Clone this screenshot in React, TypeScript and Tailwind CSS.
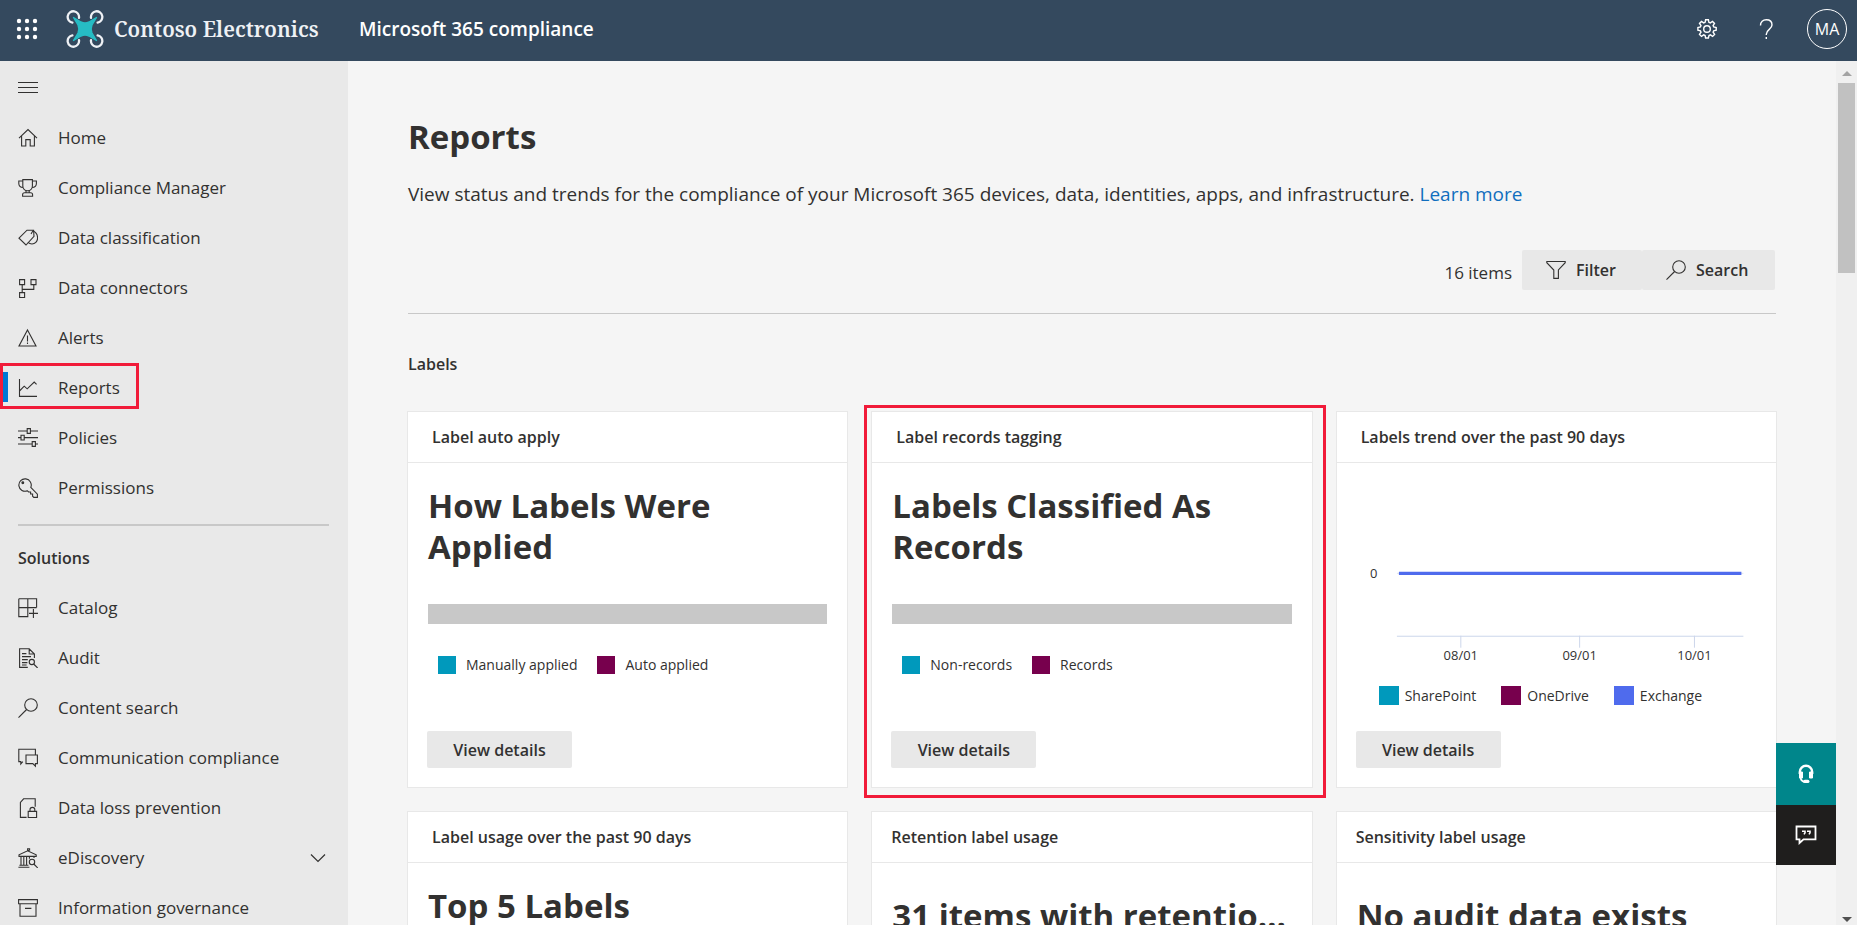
import type { ReactNode } from "react";

function Icon({ children }: { children: ReactNode }) {
  return (
    <svg viewBox="0 0 20 20" className="h-5 w-5 shrink-0" fill="none" stroke="currentColor" strokeWidth="1.1" aria-hidden="true">
      {children}
    </svg>
  );
}

const icons: Record<string, ReactNode> = {
  home: <path d="M1 10.2 10 1.6l9 8.6M3.6 8.2v9.8h4.2v-6.4h4.4V18h4.2V8.2" />,
  trophy: (
    <path d="M4.8 1.6h9.6v6.2c0 3-2 5-4.8 5s-4.8-2-4.8-5zM4.8 3H.8v2.4c0 2.2 1.6 3.8 4.4 4M14.4 3h4v2.4c0 2.2-1.6 3.8-4.4 4M8 12.6v2.2h3.2v-2.2M4.6 18.2v-1.4c0-1.2.8-2 2-2h6c1.2 0 2 .8 2 2v1.4z" />
  ),
  tags: (
    <>
      <path d="M1 10.2 9 2.2h6.6l.4 6.2-8 8.6z" />
      <path d="m13 6 2-3.2c2 1 4.6 3.6 4.6 7.2 0 3.8-2.8 6-5.6 6-1.6 0-3-.6-4-1.6" />
    </>
  ),
  connectors: <path d="M1.6 1.6h5v5h-5zM13 1.6h5v5h-5zM1.6 14.6h5v5h-5zM4.2 6.6v8M15.8 6.6v4.8H4.2" />,
  alert: <path d="M9.5 2 18 18H1zM9.5 7.4v6M9.5 14.6v1.4" />,
  chart: <path d="M1.5 1v17.4H19M1.5 13l4.7-4.8 3 2.6 7-6.8 2.4 2.4" />,
  sliders: (
    <path d="M0 3h9.2M12.4 3H20M0 9.6h3M6.2 9.6H20M0 16h14.2M17.4 16H20M9.2.6h3.2v4.8H9.2zM3 7.2h3.2V12H3zM14.2 13.6h3.2v4.8h-3.2z" />
  ),
  key: (
    <>
      <path d="M12.8 9.4a6.2 6.2 0 1 0-3.4 3.4l1.2 1.2h2v2h2v2.2l1.2 1.2h3.6v-3.2z" />
      <circle cx="4.8" cy="4.8" r=".9" fill="currentColor" />
    </>
  ),
  catalog: <path d="M.8.8h17.8v8.8M.8.8v17.8h9V.8M.8 9.6h17.8M15.4 11v9M11 15.4h9" />,
  audit: (
    <>
      <path d="M9.8 19.4H1.6V.8h9.6l5.2 5.2v4M11.2.8V6h5.2M4 5.6h4.4M4 8.6h9M4 11.6h5.8M4 14.6h5.4M4 17h4.6" />
      <circle cx="13.8" cy="14" r="2.6" />
      <path d="m15.6 16 4 4" />
    </>
  ),
  search: (
    <>
      <circle cx="13" cy="7" r="6.3" />
      <path d="M8.6 11.5.5 19.6" />
    </>
  ),
  chat: <path d="M4.8 13.6 2.8 16v-2.4H.8V1.2h16.6v5.4M8 7h11.4v8.6h-2v2.6l-2.6-2.6H8z" />,
  dlp: (
    <>
      <path d="M8.6 19.4H2.4V4.4L5.6.8h11.6v8" />
      <path d="M10.2 13.4h8.4v6.2h-8.4zM12 13.4v-1.8c0-1.4 1-2.2 2.4-2.2s2.4.8 2.4 2.2v1.8" />
    </>
  ),
  bank: (
    <>
      <path d="M1 8.4V6.8l8.6-4 8.6 4v1.6zM9.6 3V.8h2v1.4h-2M3 8.4v8.8M5.8 8.4v8.8M8.6 8.4v8.8M11.4 8.4v2.4M16 8.4V10M.4 19.2h11M1.4 17.2h9" />
      <circle cx="14" cy="14" r="2.7" />
      <path d="m15.8 16 4 4" />
    </>
  ),
  archive: <path d="M.6 1.6h18.8v4.2H.6zM2 5.8v12.4h16V5.8M7 10.4h6.4" />,
};

type Item = { label: string; icon: string; active?: boolean; expandable?: boolean };

const mainItems: Item[] = [
  { label: "Home", icon: "home" },
  { label: "Compliance Manager", icon: "trophy" },
  { label: "Data classification", icon: "tags" },
  { label: "Data connectors", icon: "connectors" },
  { label: "Alerts", icon: "alert" },
  { label: "Reports", icon: "chart", active: true },
  { label: "Policies", icon: "sliders" },
  { label: "Permissions", icon: "key" },
];

const solutionItems: Item[] = [
  { label: "Catalog", icon: "catalog" },
  { label: "Audit", icon: "audit" },
  { label: "Content search", icon: "search" },
  { label: "Communication compliance", icon: "chat" },
  { label: "Data loss prevention", icon: "dlp" },
  { label: "eDiscovery", icon: "bank", expandable: true },
  { label: "Information governance", icon: "archive" },
];

function NavList({ items }: { items: Item[] }) {
  return (
    <ul>
      {items.map((item) => (
        <li key={item.label} className="relative">
          <a href="#" aria-current={item.active ? "page" : undefined} className="flex h-[50px] items-center gap-5 pl-[18px] pr-[22px]">
            <Icon>{icons[item.icon]}</Icon>
            <span className="grow">{item.label}</span>
            {item.expandable && (
              <svg viewBox="0 0 16 16" className="h-4 w-4" fill="none" stroke="currentColor" strokeWidth="1.2" aria-hidden="true">
                <path d="m1 4.5 7 7 7-7" />
              </svg>
            )}
          </a>
          {item.active && (
            <>
              <span className="absolute left-[3px] top-[9px] h-[30px] w-[5px] bg-[#0078d4]" />
              <span className="pointer-events-none absolute left-0 top-0 h-[46px] w-[139px] border-[3px] border-[#f11b39]" />
            </>
          )}
        </li>
      ))}
    </ul>
  );
}

function Logo() {
  const rotor = "M6.4 12.6A5.7 5.7 0 1 1 13 7.8";
  return (
    <svg viewBox="0 0 38 38" className="h-[38px] w-[38px]" fill="none" aria-hidden="true">
      <g stroke="#eef1f5" strokeWidth="2.3" strokeLinecap="round">
        <path d={rotor} />
        <path d={rotor} transform="matrix(-1 0 0 1 38 0)" />
        <path d={rotor} transform="matrix(1 0 0 -1 0 38)" />
        <path d={rotor} transform="matrix(-1 0 0 -1 38 38)" />
      </g>
      <path
        d="M7.5 7.5 15 12q4 1.8 8 0l7.500-4.500L26 15q-1.800 4 0 8l4.500 7.500L23 26q-4-1.800-8 0l-7.500 4.500L12 23q1.800-4 0-8z"
        fill="#26bcc4"
        stroke="#26bcc4"
        strokeWidth="1.4"
        strokeLinejoin="round"
      />
    </svg>
  );
}

function Header() {
  return (
    <header className="flex h-[61px] shrink-0 items-center bg-[#34495e] pb-1 text-white">
      <button type="button" aria-label="App launcher" className="ml-4">
        <svg viewBox="0 0 22 22" className="h-[22px] w-[22px]" fill="#fff" aria-hidden="true">
          {[3, 11, 19].map((y) => [3, 11, 19].map((x) => <circle key={`${x}-${y}`} cx={x} cy={y} r="2.2" />))}
        </svg>
      </button>
      <a href="#" className="ml-7 flex w-[293px] items-center gap-[10px]">
        <Logo />
        <span className="whitespace-nowrap font-['Noto_Serif','DejaVu_Serif',serif] text-[21px] font-semibold leading-6 text-[#eef1f5]">
          Contoso Electronics
        </span>
      </a>
      <span className="text-[19px] font-semibold leading-6">Microsoft 365 compliance</span>
      <div className="ml-auto flex items-center gap-[31px] pr-[10px]">
        <div className="flex items-center gap-[39px]">
          <button type="button" aria-label="Settings">
            <svg viewBox="0 0 20 20" className="h-5 w-5" fill="none" stroke="#fff" strokeWidth="1.4" aria-hidden="true">
              <path d="M8.6.8h2.8l.5 2.5 1.4.6 2.2-1.5 2 2-1.4 2.2.6 1.4 2.5.5v2.8l-2.5.5-.6 1.4 1.5 2.2-2 2-2.2-1.5-1.4.6-.6 2.5H8.6l-.5-2.5-1.4-.6-2.2 1.5-2-2L4 13.2l-.6-1.4-2.5-.5V8.5l2.5-.5.6-1.4-1.5-2.2 2-2 2.2 1.5 1.4-.6z" />
              <circle cx="10" cy="10" r="3.3" />
            </svg>
          </button>
          <button type="button" aria-label="Help">
            <svg viewBox="0 0 20 20" className="h-5 w-5" fill="none" stroke="#fff" strokeWidth="1.4" aria-hidden="true">
              <path d="M4.5 6.5C4.5 3 7 .8 10.3.8S16 2.8 16 6c0 4.2-5.7 4.6-5.7 9.2v.8M10.3 18v2" />
            </svg>
          </button>
        </div>
        <button type="button" className="flex h-10 w-10 items-center justify-center rounded-full border border-white text-[16px]">
          MA
        </button>
      </div>
    </header>
  );
}

function Swatch({ color, label }: { color: string; label: string }) {
  return (
    <li className="flex items-center gap-[10px]">
      <span className={`h-[18px] w-[18px] ${color}`} />
      {label}
    </li>
  );
}

const TEAL = "bg-[#0099bc]";
const PLUM = "bg-[#77004d]";

function DetailsButton() {
  return (
    <button type="button" className="mb-[19px] ml-[19px] h-[37px] w-[145px] shrink-0 rounded-[2px] bg-[#e8e8e8] text-[16px] font-semibold leading-6">
      View details
    </button>
  );
}

function Card({ title, children, flush }: { title: string; children: ReactNode; flush?: boolean }) {
  return (
    <section className="flex h-[377px] min-w-0 flex-col items-start border border-[#e8e8e8] bg-white">
      <h3
        className={`flex h-[51px] w-full shrink-0 items-center border-b border-[#e8e8e8] text-[16px] font-semibold ${flush ? "pl-[19px]" : "pl-6"}`}
      >
        {title}
      </h3>
      {children}
    </section>
  );
}

function BarCard({ title, heading, legend }: { title: string; heading: ReactNode; legend: [string, string][] }) {
  return (
    <Card title={title}>
      <div className="w-full grow px-5 pt-[22px]">
        <p className="text-[33px] font-bold leading-[41px]">{heading}</p>
        <div className="mt-[37px] h-5 bg-[#c8c8c8]" />
        <ul className="mt-[29px] flex gap-5 pl-[10px] text-[14px] leading-6">
          {legend.map(([color, label]) => (
            <Swatch key={label} color={color} label={label} />
          ))}
        </ul>
      </div>
      <DetailsButton />
    </Card>
  );
}

function TrendCard() {
  const ticks = [
    { x: 124, label: "08/01" },
    { x: 243, label: "09/01" },
    { x: 358, label: "10/01" },
  ];
  return (
    <Card title="Labels trend over the past 90 days">
      <div className="w-full grow">
        <svg viewBox="0 1 440 205" className="block w-full" aria-label="Labels trend" role="img">
          <line x1="60" x2="407" y1="111.5" y2="111.5" stroke="#dfe4ee" />
          <line x1="62" x2="405" y1="111.5" y2="111.5" stroke="#4f6bed" strokeWidth="3.4" />
          <line x1="60" x2="407" y1="174.5" y2="174.5" stroke="#ccd6eb" />
          <text x="33" y="116" fontSize="13" fill="#333">
            0
          </text>
          {ticks.map((t) => (
            <g key={t.label}>
              <line x1={t.x} x2={t.x} y1="174" y2="186" stroke="#ccd6eb" />
              <text textAnchor="middle" x={t.x} y="198" fontSize="13" fill="#333">
                {t.label}
              </text>
            </g>
          ))}
        </svg>
        <ul className="mt-4 flex gap-[25px] pl-[42px] text-[14px] leading-6">
          {[
            [TEAL, "SharePoint"],
            [PLUM, "OneDrive"],
            ["bg-[#4f6bed]", "Exchange"],
          ].map(([color, label]) => (
            <li key={label} className="flex items-center gap-[6px]">
              <span className={`h-[19px] w-5 ${color}`} />
              {label}
            </li>
          ))}
        </ul>
      </div>
      <DetailsButton />
    </Card>
  );
}

function Scrollbar() {
  return (
    <div className="flex w-[21px] shrink-0 flex-col items-center bg-[#f0f0f0]" aria-hidden="true">
      <span className="mt-[10px] h-0 w-0 border-x-[5px] border-b-[5px] border-x-transparent border-b-[#a3a3a3]" />
      <span className="mt-[7px] h-[190px] w-[17px] bg-[#c1c1c1]" />
      <span className="mb-[3px] mt-auto h-0 w-0 border-x-[5px] border-t-[5px] border-x-transparent border-t-[#505050]" />
    </div>
  );
}

export default function App() {
  return (
    <div className="flex h-screen flex-col overflow-hidden bg-[#f5f5f5] font-['Open_Sans','Noto_Sans',sans-serif] text-[17px] text-[#323130]">
      <Header />
      <div className="flex min-h-0 grow">
        <nav aria-label="Main" className="w-[348px] shrink-0 overflow-hidden bg-[#e9e9e9]">
          <button type="button" aria-label="Toggle navigation" className="ml-[18px] mt-[17px] block h-5 w-5">
            <Icon>
              <path d="M0 4.5h20M0 9.5h20M0 14.5h20" />
            </Icon>
          </button>
          <div className="mt-[15px]">
            <NavList items={mainItems} />
          </div>
          <hr className="mb-[7px] ml-[18px] mr-[19px] mt-[11px] border-t-2 border-[#c8c8c8]" />
          <h2 className="flex h-[50px] items-center pl-[18px] text-[16px] font-semibold">Solutions</h2>
          <NavList items={solutionItems} />
        </nav>

        <main className="min-w-0 grow overflow-hidden px-[60px]">
          <h1 className="mt-[53px] text-[33px] font-bold leading-[46px]">Reports</h1>
          <p className="mt-5 text-[19px] leading-7">
            View status and trends for the compliance of your Microsoft 365 devices, data, identities, apps, and infrastructure.{" "}
            <a href="#" className="text-[#106ebe]">
              Learn more
            </a>
          </p>
          <div className="mt-[42px] flex h-10 items-center justify-end pr-px">
            <span className="mr-[10px] mt-[6px]">16 items</span>
            <button type="button" className="flex h-10 w-[120px] items-center gap-[10px] rounded-[2px] bg-[#e8e8e8] pl-6 text-[16px] font-semibold">
              <Icon>
                <path d="M.8 1.5h18.4v1.2L12.4 10v8.400H7.800V10L.8 2.700z" />
              </Icon>
              Filter
            </button>
            <button type="button" className="flex h-10 w-[133px] items-center gap-[10px] rounded-[2px] bg-[#e8e8e8] pl-6 text-[16px] font-semibold">
              <Icon>{icons.search}</Icon>
              Search
            </button>
          </div>
          <hr className="mt-[23px] border-[#c8c8c8]" />
          <h2 className="mt-[38px] text-[16px] font-semibold leading-6">Labels</h2>
          <div className="-mx-px mt-[35px] grid grid-cols-3 gap-[23px]">
            <BarCard
              title="Label auto apply"
              heading={<>How Labels Were<br />Applied</>}
              legend={[
                [TEAL, "Manually applied"],
                [PLUM, "Auto applied"],
              ]}
            />
            <div className="relative min-w-0">
              <BarCard
                title="Label records tagging"
                heading={<>Labels Classified As<br />Records</>}
                legend={[
                  [TEAL, "Non-records"],
                  [PLUM, "Records"],
                ]}
              />
              <span className="pointer-events-none absolute -bottom-[10px] -left-[7px] -right-[13px] -top-[6px] border-[3px] border-[#f11b39]" />
            </div>
            <TrendCard />
            <Card title="Label usage over the past 90 days">
              <p className="w-full px-5 pt-[22px] text-[33px] font-bold leading-[41px]">Top 5 Labels</p>
            </Card>
            <Card title="Retention label usage" flush>
              <p className="w-full truncate px-5 pt-[32px] text-[33px] font-bold leading-[41px]">31 items with retention labels</p>
            </Card>
            <Card title="Sensitivity label usage" flush>
              <p className="w-full truncate px-5 pt-[32px] text-[33px] font-bold leading-[41px]">No audit data exists</p>
            </Card>
          </div>
        </main>
        <Scrollbar />
      </div>
      <div className="fixed bottom-[60px] right-[21px] flex flex-col text-white">
        <button type="button" aria-label="Get help" className="flex h-[62px] w-[60px] items-center justify-center bg-[#00868b]">
          <svg viewBox="0 0 20 20" className="h-5 w-5" fill="none" stroke="#fff" strokeWidth="2.4" aria-hidden="true">
            <path d="M3.8 10V8a6.2 6.2 0 0 1 12.4 0v2" />
            <path d="M16.5 8v6h-3V8zM6.5 8v6h-3V8z" fill="#fff" strokeWidth="1" />
            <path d="M4.5 13q0 4 4 4.8" strokeWidth="1.8" />
            <path d="M8.8 17.4h3" strokeWidth="3.4" strokeLinecap="round" />
          </svg>
        </button>
        <button type="button" aria-label="Give feedback" className="flex h-[60px] w-[60px] items-center justify-center bg-[#1f1e1d]">
          <svg viewBox="0 0 22 20" className="h-5 w-[22px]" fill="none" stroke="#fff" strokeWidth="1.8" aria-hidden="true">
            <path d="M1.5 1.5h19v12.8h-12L4.500 18v-3.700h-3z" />
            <path d="M7 6.200h3v1.600l-1 1.600M12 6.200h3v1.600l-1 1.600" strokeWidth="1.6" />
          </svg>
        </button>
      </div>
    </div>
  );
}
